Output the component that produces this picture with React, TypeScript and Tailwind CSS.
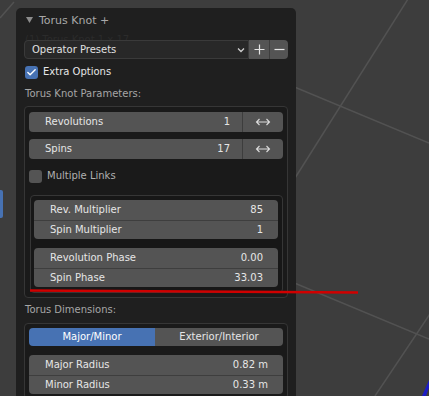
import { Check } from 'lucide-react';

const NumRow = ({ label, value, first }: { label: string; value: string; first?: boolean }) => (
    <div className={`flex items-center justify-between h-[19.5px] pl-[16px] pr-[15px] text-[#e6e6e6] ${first ? '' : 'border-t border-[#3e3e3e]'}`}>
        <span>{label}</span>
        <span>{value}</span>
    </div>
);

const ArrowRow = ({ label, value }: { label: string; value: string }) => (
    <div className="flex h-[20px] text-[#e6e6e6]">
        <div className="flex-1 flex items-center justify-between bg-[#545454] rounded-l-[4px] pl-[16px] pr-[12px]">
            <span>{label}</span>
            <span>{value}</span>
        </div>
        <div className="w-[41px] flex items-center justify-center bg-[#545454] border-l border-[#3d3d3d] rounded-r-[4px]">
            <svg width="16" height="10" viewBox="0 0 16 10">
                <path d="M1.5 5H14.5M4.5 2L1.5 5L4.5 8M11.5 2L14.5 5L11.5 8" stroke="#dcdcdc" strokeWidth="1.1" fill="none" />
            </svg>
        </div>
    </div>
);

export default function App() {
    return (
        <div className="relative w-[429px] h-[396px] overflow-hidden bg-[#3d3d3d] font-['DejaVu_Sans',sans-serif] text-[10px] leading-none">
            {/* viewport background */}
            <svg className="absolute inset-0" width="429" height="396">
                <g stroke="#525252" strokeWidth="1.5" fill="none">
                    <line x1="420" y1="-20" x2="290" y2="186" />
                    <line x1="280" y1="81" x2="429" y2="143" />
                    <line x1="280" y1="277" x2="429" y2="339" />
                    <line x1="446" y1="290" x2="375" y2="396" />
                    <line x1="0" y1="18" x2="14" y2="2" />
                </g>
                <rect x="-3" y="190" width="6" height="28" rx="2" fill="#4772b3" />
                <path d="M429 380 Q425 389 422 396 L426 396 Q428 390 429 388 Z" fill="#1c1cc4" />
            </svg>

            <div className="relative ml-[16px] mt-[8px] w-[280px] h-[400px] bg-[#1f1f1f] rounded-[5px] px-[8px]">
                {/* header */}
                <div className="flex items-center h-[24px] pl-[2px] text-[11px] text-[#a8a8a8]">
                    <svg width="7" height="6" viewBox="0 0 7 6" className="mr-[6px]">
                        <polygon points="0,0 7,0 3.5,6" fill="#8c8c8c" />
                    </svg>
                    <span>Torus Knot +</span>
                </div>
                <div className="absolute left-[9px] top-[27px] text-[10px] text-[#2b2b2b]">(1) Torus Knot 1 x 17</div>

                {/* presets */}
                <div className="relative flex h-[19px] mt-[8px]">
                    <div className="flex-1 flex items-center justify-between bg-[#282828] border border-[#3a3a3a] rounded-l-[4px] pl-[7px] pr-[3px] text-[#e0e0e0]">
                        <span>Operator Presets</span>
                        <svg width="8" height="6" viewBox="0 0 8 6">
                            <polyline points="1,1.5 4,4.5 7,1.5" stroke="#d0d0d0" strokeWidth="1.3" fill="none" />
                        </svg>
                    </div>
                    <div className="w-[20px] flex items-center justify-center bg-[#545454]">
                        <svg width="11" height="11" viewBox="0 0 11 11">
                            <path d="M5.5 0.5V10.5M0.5 5.5H10.5" stroke="#e6e6e6" strokeWidth="1.2" />
                        </svg>
                    </div>
                    <div className="w-[19px] flex items-center justify-center bg-[#545454] border-l border-[#3d3d3d] rounded-r-[4px]">
                        <svg width="11" height="11" viewBox="0 0 11 11">
                            <path d="M0.5 5.5H10.5" stroke="#e6e6e6" strokeWidth="1.2" />
                        </svg>
                    </div>
                </div>

                {/* extra options */}
                <div className="flex items-center h-[16px] mt-[5px] pl-[1px] gap-[5px] text-[#e6e6e6]">
                    <div className="w-[13px] h-[13px] rounded-[3px] bg-[#4772b3] flex items-center justify-center">
                        <Check size={11} strokeWidth={3} color="#ffffff" />
                    </div>
                    <span>Extra Options</span>
                </div>

                <div className="flex items-center h-[20px] mt-[4px] pl-[1px] text-[#a6a6a6]">Torus Knot Parameters:</div>

                {/* parameters box */}
                <div className="mt-[2px] border border-[#363636] bg-[#1a1a1a] rounded-[4px] px-[4px] pt-[5px] pb-[4px]">
                    <ArrowRow label="Revolutions" value="1" />
                    <div className="mt-[7px]">
                        <ArrowRow label="Spins" value="17" />
                    </div>
                    <div className="flex items-center h-[16px] mt-[9px] gap-[5px] text-[#b0b0b0]">
                        <div className="w-[13px] h-[13px] rounded-[3px] bg-[#545454]" />
                        <span>Multiple Links</span>
                    </div>
                    <div className="mt-[11px] ml-[1px] border border-[#363636] bg-[#171717] rounded-[4px] pl-[3px] pr-[4px] pt-[4px] pb-[5px]">
                        <div className="bg-[#545454] rounded-[4px]">
                            <NumRow label="Rev. Multiplier" value="85" first />
                            <NumRow label="Spin Multiplier" value="1" />
                        </div>
                        <div className="bg-[#545454] rounded-[4px] mt-[9px]">
                            <NumRow label="Revolution Phase" value="0.00" first />
                            <NumRow label="Spin Phase" value="33.03" />
                        </div>
                    </div>
                </div>

                <div className="flex items-center h-[20px] mt-[2px] pl-[1px] text-[#a6a6a6]">Torus Dimensions:</div>

                {/* dimensions box */}
                <div className="mt-[3px] border border-[#363636] bg-[#1a1a1a] rounded-[4px] px-[4px] pt-[4px] pb-[4px]">
                    <div className="flex h-[18px]">
                        <div className="w-[126px] flex items-center justify-center bg-[#4772b3] rounded-l-[4px] text-[#ffffff]">Major/Minor</div>
                        <div className="flex-1 flex items-center justify-center bg-[#545454] rounded-r-[4px] text-[#e6e6e6]">Exterior/Interior</div>
                    </div>
                    <div className="mt-[9px] bg-[#545454] rounded-[4px]">
                        <NumRow label="Major Radius" value="0.82 m" first />
                        <NumRow label="Minor Radius" value="0.33 m" />
                    </div>
                </div>
            </div>

            {/* annotation stroke */}
            <svg className="absolute inset-0 pointer-events-none" width="429" height="396">
                <line x1="30" y1="290.5" x2="358" y2="292.5" stroke="#d00000" strokeWidth="2.4" />
            </svg>
        </div>
    );
}
